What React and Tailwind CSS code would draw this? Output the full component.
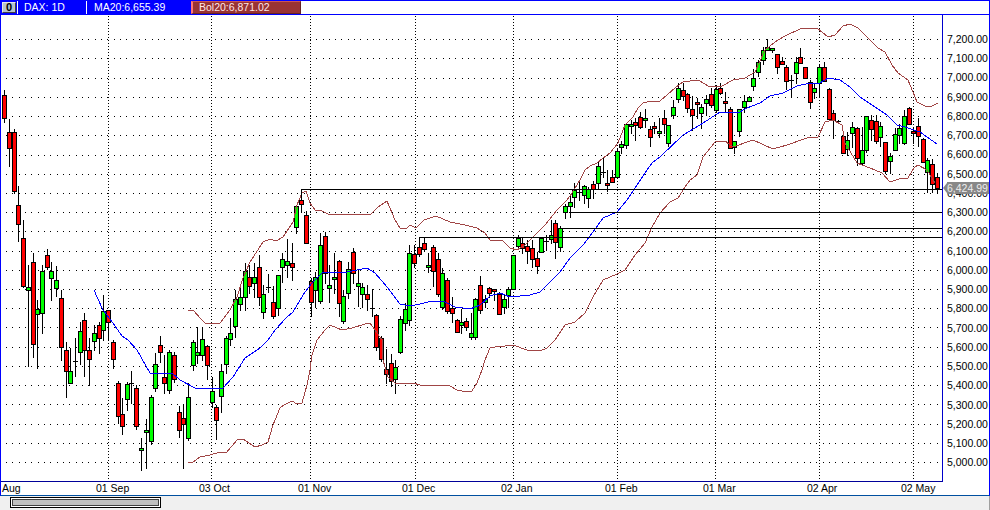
import React from "react";

// x, high, low, body top, body bottom, colour (r / g / k = doji)
const candles = [
  [4,90,122,95,118,"r"],[9,119,166,132,148,"r"],[14,129,193,132,191,"r"],[18,186,241,205,224,"r"],[23,220,287,238,286,"r"],
  [28,265,366,287,290,"g"],[33,253,357,262,344,"r"],[37,300,368,309,314,"g"],[42,265,333,271,313,"g"],[47,249,269,255,267,"r"],
  [51,262,300,271,278,"g"],[56,266,296,280,288,"g"],[61,290,360,298,347,"r"],[66,342,397,350,371,"r"],[70,348,383,371,383,"g"],
  [75,338,376,361,361,"k"],[80,322,364,331,352,"g"],[84,313,376,320,350,"r"],[89,338,385,350,359,"r"],[94,325,350,333,341,"g"],
  [99,322,353,325,338,"r"],[103,295,340,311,330,"g"],[108,310,340,310,322,"r"],[113,340,368,342,359,"r"],[118,381,423,383,416,"r"],
  [122,398,434,414,426,"r"],[127,382,410,384,399,"g"],[131,371,403,383,383,"k"],[136,385,429,388,426,"r"],[141,438,470,448,450,"g"],
  [146,419,468,430,432,"g"],[151,395,444,397,441,"g"],[155,353,391,364,388,"g"],[160,336,362,345,352,"r"],[164,355,393,377,383,"r"],
  [169,350,393,352,390,"g"],[174,352,382,355,379,"r"],[179,406,437,412,430,"r"],[183,405,468,418,424,"r"],[188,383,440,397,438,"g"],
  [193,340,370,342,365,"g"],[197,327,363,352,355,"g"],[202,327,360,339,355,"g"],[207,345,379,346,365,"r"],[212,377,407,391,402,"g"],
  [216,405,439,407,420,"r"],[221,364,412,371,396,"g"],[226,336,373,338,364,"g"],[230,318,345,333,339,"g"],[235,290,337,299,326,"g"],
  [240,285,310,297,304,"g"],[245,263,310,271,297,"g"],[249,265,293,277,286,"r"],[254,263,297,277,283,"g"],[259,255,305,267,297,"r"],
  [263,285,318,294,312,"g"],[268,274,292,287,287,"k"],[273,286,318,302,316,"r"],[278,275,315,275,308,"g"],[282,253,282,259,267,"g"],
  [287,239,277,261,265,"g"],[292,243,280,263,267,"r"],[296,205,233,206,227,"g"],[301,192,212,200,204,"r"],[306,211,243,215,243,"r"],
  [311,278,316,281,302,"r"],[315,272,307,277,290,"g"],[320,233,303,245,301,"g"],[325,232,283,236,273,"r"],[329,265,302,285,288,"g"],
  [334,253,293,277,279,"g"],[339,260,316,261,303,"r"],[343,290,323,296,321,"g"],[348,262,298,269,293,"g"],[353,248,283,252,273,"r"],
  [358,270,306,283,286,"g"],[362,283,307,287,294,"g"],[367,285,310,294,299,"r"],[372,289,316,308,308,"k"],[376,314,350,315,347,"r"],
  [381,336,361,338,359,"r"],[386,349,383,369,374,"r"],[391,354,386,363,381,"r"],[395,360,393,367,379,"g"],[400,316,353,319,352,"g"],
  [405,303,330,309,323,"g"],[409,245,325,253,320,"g"],[414,245,267,254,263,"r"],[419,237,256,247,254,"r"],[424,237,251,243,249,"r"],
  [428,253,272,265,266,"g"],[433,245,286,247,271,"r"],[438,253,296,259,294,"r"],[442,268,309,273,307,"g"],[447,278,313,280,311,"r"],
  [452,297,322,308,313,"r"],[457,319,332,320,332,"r"],[461,309,333,322,325,"g"],[466,318,330,321,327,"r"],[471,313,339,333,337,"g"],
  [475,298,339,299,337,"g"],[480,276,313,285,310,"r"],[485,295,307,299,302,"g"],[489,287,297,288,293,"r"],[494,289,300,289,291,"r"],
  [499,292,314,294,314,"r"],[504,295,313,299,307,"g"],[508,287,307,289,295,"g"],[513,255,289,255,289,"g"],[518,235,248,238,246,"g"],
  [522,237,253,243,248,"r"],[527,240,263,246,251,"r"],[532,240,267,248,259,"r"],[537,252,273,258,266,"r"],[541,237,252,238,252,"g"],
  [546,235,250,241,241,"k"],[551,220,243,235,239,"g"],[555,220,258,223,242,"r"],[560,226,251,228,247,"g"],[565,204,218,206,212,"g"],
  [570,195,217,202,206,"g"],[574,183,207,190,197,"g"],[579,182,200,192,192,"k"],[584,185,203,186,195,"g"],[588,187,207,189,198,"g"],
  [593,181,198,184,189,"r"],[598,162,188,166,183,"g"],[603,158,177,172,172,"k"],[607,170,191,183,184,"r"],[612,170,182,177,182,"r"],
  [617,149,177,151,177,"g"],[621,141,153,144,147,"g"],[626,124,148,124,145,"g"],[631,120,133,124,125,"g"],[635,118,140,122,125,"r"],
  [640,112,128,117,127,"r"],[645,109,127,118,120,"g"],[650,126,146,129,137,"r"],[654,122,133,126,128,"r"],[659,118,137,131,133,"g"],
  [664,110,133,118,124,"r"],[668,125,146,125,143,"g"],[673,100,118,107,115,"g"],[678,83,102,88,99,"g"],[683,83,100,90,96,"r"],
  [687,93,112,94,108,"r"],[692,96,130,109,115,"r"],[697,98,118,102,104,"r"],[701,104,128,107,113,"g"],[706,95,115,99,103,"g"],
  [711,88,107,94,105,"r"],[716,85,112,89,110,"g"],[720,83,94,88,93,"r"],[725,92,112,101,103,"r"],[730,107,148,109,148,"r"],
  [734,141,153,141,147,"g"],[739,109,136,109,131,"g"],[744,95,112,101,107,"g"],[749,96,101,97,101,"g"],[753,69,90,78,86,"g"],
  [758,60,76,62,72,"g"],[763,47,64,50,60,"g"],[767,39,50,47,50,"g"],[772,48,52,48,50,"g"],[777,54,73,54,67,"r"],
  [782,57,64,61,64,"r"],[786,65,89,67,81,"r"],[791,75,96,80,80,"k"],[796,57,83,62,73,"g"],[800,48,63,57,63,"r"],
  [805,67,78,67,78,"r"],[810,80,108,82,102,"r"],[814,83,98,88,92,"g"],[819,65,96,67,83,"g"],[824,62,81,67,81,"r"],
  [829,88,119,89,119,"r"],[833,110,138,113,120,"r"],[838,120,121,121,121,"k"],[843,132,153,136,153,"r"],[847,132,155,140,149,"g"],
  [852,122,147,127,133,"g"],[857,127,165,128,158,"r"],[862,127,164,150,163,"g"],[866,116,152,116,150,"g"],[871,115,140,120,129,"r"],
  [876,115,143,121,141,"r"],[880,122,146,126,137,"g"],[885,142,173,142,171,"r"],[890,153,173,156,161,"g"],[895,128,150,134,150,"g"],
  [899,124,143,128,135,"g"],[904,110,144,116,143,"g"],[909,107,124,108,124,"r"],[913,127,143,131,133,"r"],[918,118,146,126,136,"r"],
  [923,138,162,139,162,"r"],[927,158,192,160,172,"g"],[932,159,192,164,184,"r"],[937,173,193,177,188,"r"],
];

const ma = "94,290 97,297 103,310 113,323 122,336 128,340 137,350 150,373 172,373 180,380 195,388 223,388 233,377 245,358 260,348 268,340 275,330 287,317 293,312 303,295 312,283 322,273 330,272 347,272 367,268 375,273 388,288 400,304 410,306 420,304 432,301 445,302 455,307 470,309 480,305 490,296 500,293 510,297 530,295 540,292 550,282 560,272 570,258 583,245 593,232 603,218 617,212 627,200 637,185 647,170 652,163 660,157 683,135 700,125 720,112 738,113 747,108 760,103 770,96 783,93 797,86 810,83 820,83 828,78 840,80 850,87 860,97 875,107 887,115 897,125 905,127 920,132 937,144";
const upper = "188,310 194,311 200,318 205,323 220,323 230,310 237,297 243,278 250,262 263,242 270,239 276,241 283,237 293,222 297,205 302,193 306,191 310,203 315,210 322,211 328,214 340,214 365,214 371,214 378,207 387,201 395,220 400,228 407,228 410,225 416,228 424,220 436,216 450,222 465,225 477,228 485,233 490,240 502,240 510,248 517,250 525,245 535,235 545,225 557,210 567,200 572,193 580,180 585,170 590,166 597,163 603,158 610,153 618,143 625,125 633,117 638,108 643,103 647,102 660,101 675,88 683,82 698,80 710,87 722,86 733,80 745,78 755,72 765,50 775,42 785,36 800,29 817,28 828,37 835,35 843,26 850,24 858,28 868,38 878,48 885,52 892,65 898,73 908,80 913,92 917,102 925,106 930,107 938,103";
const lower = "188,462 193,462 200,457 210,455 220,452 226,453 237,440 243,439 255,447 262,445 268,442 273,425 280,408 284,405 292,401 297,404 302,403 307,385 310,370 312,355 317,340 325,330 330,325 342,330 352,328 365,324 370,323 375,330 382,340 383,360 388,377 395,383 407,383 413,383 420,385 440,385 450,386 457,390 467,392 472,391 477,383 482,370 485,360 490,348 495,347 505,346 513,345 527,350 540,351 547,348 555,340 565,325 575,322 585,313 593,297 603,280 617,274 625,270 635,255 645,243 652,227 660,213 670,202 678,198 685,187 690,180 697,175 703,157 715,142 725,141 733,147 753,140 773,149 787,145 807,138 818,137 825,122 833,120 842,125 845,143 857,163 875,170 882,173 890,182 902,178 908,178 914,168 918,165 927,170 935,183";

const priceRows = [39,58,78,97,116,135,155,174,193,212,231,251,270,289,308,327,347,366,385,404,424,443,462];
const monthCols = [108,211,310,415,513,617,715,819,913];

const prices = ["7,200.00","7,100.00","7,000.00","6,900.00","6,800.00","6,700.00","6,600.00","6,500.00","6,400.00","6,300.00","6,200.00","6,100.00","6,000.00","5,900.00","5,800.00","5,700.00","5,600.00","5,500.00","5,400.00","5,300.00","5,200.00","5,100.00","5,000.00"];

const dates = [
  { label: "Aug", cls: "w-[94px]" },
  { label: "01 Sep", cls: "w-[103px]" },
  { label: "03 Oct", cls: "w-[99px]" },
  { label: "01 Nov", cls: "w-[104px]" },
  { label: "01 Dec", cls: "w-[99px]" },
  { label: "02 Jan", cls: "w-[104px]" },
  { label: "01 Feb", cls: "w-[98px]" },
  { label: "01 Mar", cls: "w-[104px]" },
  { label: "02 Apr", cls: "w-[94px]" },
  { label: "02 May", cls: "w-[40px]" },
];

const Chart = () => (
  <svg viewBox="1 15 941 466" className="block w-[941px] h-[466px]" shapeRendering="crispEdges">
    {priceRows.map((y) => (
      <line key={y} x1="6" x2="940" y1={y + 0.5} y2={y + 0.5} stroke="#000" strokeDasharray="1 5.33" />
    ))}
    {monthCols.map((x) => (
      <line key={x} x1={x + 0.5} x2={x + 0.5} y1="16" y2="479" stroke="#000" strokeDasharray="1 2" />
    ))}
    {candles.map(([x, hi, lo, top, bot, c]) => (
      <g key={x}>
        <line x1={x + 0.5} x2={x + 0.5} y1={hi} y2={lo + 1} stroke="#000" />
        {c === "k" ? (
          <line x1={x - 2} x2={x + 3} y1={top + 0.5} y2={top + 0.5} stroke="#000" />
        ) : (
          <rect x={x - 1.5} y={top + 0.5} width="4" height={Math.max(bot - top, 2)} fill={c === "r" ? "#ff0000" : "#00ff00"} stroke="#000" />
        )}
      </g>
    ))}
    <polyline points={lower} fill="none" stroke="#a04545" />
    <polyline points={upper} fill="none" stroke="#a04545" />
    <polyline points={ma} fill="none" stroke="#0000ff" />
    <path d="M301.5 195V189.5H942M570 212.5H942M560 228.5H942M419.5 245V237.5H942" fill="none" stroke="#000" />
  </svg>
);

export default function App() {
  return (
    <div className="w-[990px] h-[510px] flex flex-col bg-white text-black text-[10.5px] leading-none font-['Liberation_Sans',Arial,sans-serif]">
      <div className="h-[496px] flex flex-col border-x border-x-[#0000ff] border-b border-b-[#0050a0]">
        {/* legend strip */}
        <div className="h-[15px] flex border-y border-y-[#0000ff]">
          <div className="w-[190px] flex items-center bg-[#0000ff] text-white">
            <div className="w-[16px] h-[13px] pl-px flex items-center">
              <div className="w-[14px] h-[11px] flex items-center justify-center bg-[#b8c4cc] border border-[#e8e8e8] border-b-[#404040] border-r-[#404040] text-black font-bold text-[11px]">0</div>
            </div>
            <div className="w-[69px] h-full flex items-center pl-[6px] border-l border-white">DAX: 1D</div>
            <div className="flex-1 h-full flex items-center pl-[7px] border-l border-white">MA20:6,655.39</div>
          </div>
          <div className="w-[110px] flex items-center pl-[6px] bg-[#993333] text-[#ffe8e8] border-l-2 border-l-[#ff7777] border-t border-t-[#cc5555] border-b border-b-[#662222] border-r border-r-[#662222]">Bol20:6,871.02</div>
        </div>

        <div className="h-[467px] flex">
          <div className="w-[942px] border-r border-r-[#0000cc] border-b border-b-[#000099]">
            <Chart />
          </div>
          {/* price axis */}
          <div className="relative flex-1 flex flex-col pl-[4px] pt-[14.4px] overflow-hidden">
            {prices.map((p) => (
              <div key={p} className="h-[19.26px] flex items-center whitespace-nowrap">{p}</div>
            ))}
            <div className="absolute left-0 top-[167px] w-[46px] h-[12px] flex items-center">
              <svg width="4" height="12" viewBox="0 0 4 12" className="shrink-0">
                <polygon points="0,6 4,1 4,11" fill="#888888" />
              </svg>
              <div className="flex-1 h-full flex items-center bg-[#888888] text-[#eeeeee] whitespace-nowrap">6,424.99</div>
            </div>
          </div>
        </div>

        {/* date axis */}
        <div className="flex-1 flex items-center pl-px">
          {dates.map((d) => (
            <div key={d.label} className={`${d.cls} whitespace-nowrap`}>{d.label}</div>
          ))}
        </div>
      </div>

      {/* scroll strip */}
      <div className="flex-1 bg-[#f0f0f0] border-r border-r-[#a0a0a0] pl-[10px] pt-[1px]">
        <div className="w-[151px] h-[11px] border border-black bg-white p-px">
          <div className="h-full bg-[#c0c0c0] border border-[#404040]"></div>
        </div>
      </div>
    </div>
  );
}
